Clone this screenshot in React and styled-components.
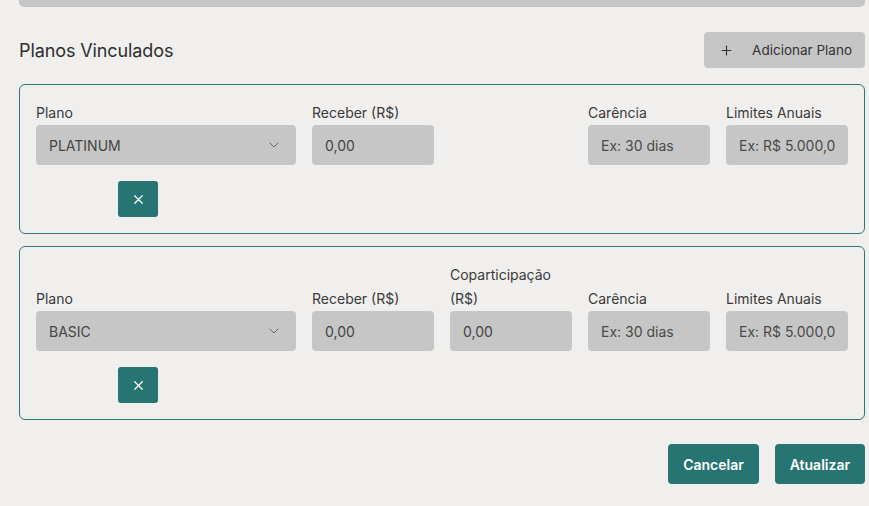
import React from "react";
import styled, { createGlobalStyle } from "styled-components";
import { ChevronDown, Plus, X } from "lucide-react";

const GlobalStyle = createGlobalStyle`
  html, body {
    margin: 0;
    padding: 0;
    background: #f0efed;
    font-family: Inter, "Noto Sans", sans-serif;
    color: #333;
  }
  * { box-sizing: border-box; }
`;

const Page = styled.div`
  padding: 0 4px 0 19px;
  width: 869px;
`;

const TopBar = styled.div`
  height: 7px;
  background: #c6c6c6;
  border-radius: 0 0 5px 5px;
`;

const Header = styled.div`
  display: flex;
  align-items: center;
  justify-content: space-between;
  margin-top: 25px;
  margin-bottom: 16px;
`;

const Title = styled.h2`
  margin: 0;
  font-size: 18px;
  font-weight: 400;
  color: #2e2e2e;
  letter-spacing: -0.1px;
`;

const AddButton = styled.button`
  display: flex;
  align-items: center;
  gap: 18px;
  height: 36px;
  padding: 0 13px 0 15px;
  border: none;
  border-radius: 4px;
  background: #c6c6c6;
  color: #333;
  font-family: inherit;
  font-size: 13.5px;
`;

const Card = styled.div`
  border: 1px solid #2a7a78;
  border-radius: 6px;
  padding: 16px;
  margin-bottom: 12px;
`;

const Fields = styled.div`
  display: grid;
  grid-template-columns: 260px repeat(4, 122px);
  column-gap: 16px;
  align-items: end;
`;

const Field = styled.div`
  display: flex;
  flex-direction: column;
`;

const Label = styled.label`
  font-size: 14px;
  line-height: 24px;
  color: #3a3a3a;
`;

const Control = styled.div`
  display: flex;
  align-items: center;
  justify-content: space-between;
  height: 40px;
  padding: 0 14px 0 13px;
  border-radius: 4px;
  background: #c6c6c6;
  font-size: 14px;
  color: #444;
`;

const Input = styled.input`
  height: 40px;
  width: 100%;
  padding: 0 13px;
  border: none;
  border-radius: 4px;
  background: #c6c6c6;
  font-family: inherit;
  font-size: 14px;
  color: #444;
  outline: none;
  &::placeholder { color: #4a4a4a; }
`;

const DeleteButton = styled.button`
  display: flex;
  align-items: center;
  justify-content: center;
  width: 40px;
  height: 36px;
  margin: 16px 0 0 82px;
  border: none;
  border-radius: 3px;
  background: #267573;
  color: #fff;
`;

const Footer = styled.div`
  display: flex;
  justify-content: flex-end;
  gap: 16px;
  margin-top: 24px;
`;

const ActionButton = styled.button`
  height: 40px;
  padding: 0 15px;
  border: none;
  border-radius: 4px;
  background: #267573;
  color: #fff;
  font-family: inherit;
  font-size: 14px;
  font-weight: 600;
`;

const planos = [
  { nome: "PLATINUM", copart: false },
  { nome: "BASIC", copart: true },
];

function PlanoCard({ plano }) {
  return (
    <Card>
      <Fields>
        <Field>
          <Label>Plano</Label>
          <Control>
            {plano.nome}
            <ChevronDown size={16} strokeWidth={1.5} color="#666" />
          </Control>
        </Field>
        <Field>
          <Label>Receber (R$)</Label>
          <Input readOnly value="0,00" />
        </Field>
        {plano.copart ? (
          <Field>
            <Label>Coparticipação (R$)</Label>
            <Input readOnly value="0,00" />
          </Field>
        ) : (
          <div />
        )}
        <Field>
          <Label>Carência</Label>
          <Input placeholder="Ex: 30 dias" />
        </Field>
        <Field>
          <Label>Limites Anuais</Label>
          <Input placeholder="Ex: R$ 5.000,00" />
        </Field>
      </Fields>
      <DeleteButton>
        <X size={15} strokeWidth={2} />
      </DeleteButton>
    </Card>
  );
}

export default function App() {
  return (
    <Page>
      <GlobalStyle />
      <TopBar />
      <Header>
        <Title>Planos Vinculados</Title>
        <AddButton>
          <Plus size={15} strokeWidth={1.8} />
          Adicionar Plano
        </AddButton>
      </Header>
      {planos.map((p) => (
        <PlanoCard key={p.nome} plano={p} />
      ))}
      <Footer>
        <ActionButton>Cancelar</ActionButton>
        <ActionButton>Atualizar</ActionButton>
      </Footer>
    </Page>
  );
}
